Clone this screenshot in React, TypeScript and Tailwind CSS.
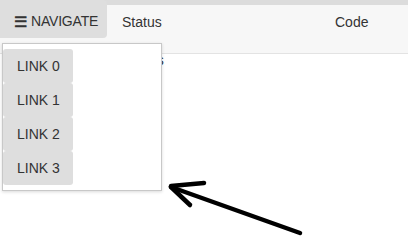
import React from 'react'

const links = ['LINK 0', 'LINK 1', 'LINK 2', 'LINK 3']

const App = () => {
  return (
    <div className="relative h-[241px] w-[408px] overflow-hidden bg-white text-[14px] text-[#333] font-['Liberation_Sans',Arial,sans-serif]">
      <div className="h-[5px] bg-[#dcdcdc]" />
      <div className="flex h-[49px] items-start border-b border-[#e3e3e3] bg-[#f7f7f7]">
        <div className="relative">
          <button className="-mt-[5px] flex h-[38px] w-[107px] items-center gap-[4px] rounded-br-[4px] rounded-tr-[4px] bg-[#dedede] pl-[14px] pt-[5px] text-[14px] text-[#333]">
            <span className="text-[15px] font-bold leading-none">&#9776;</span>
            <span className="tracking-[-0.2px]">NAVIGATE</span>
          </button>
          <div className="absolute left-[2px] top-[38px] z-10 flex h-[148px] w-[160px] flex-col border border-[#c8c8c8] bg-white pt-[5px] shadow-[0_1px_3px_rgba(0,0,0,0.15)]">
            {links.map((l) => (
              <button key={l} className="flex h-[34px] w-[70px] items-center rounded-[3px] bg-[#dedede] pl-[14px] text-[14px] text-[#333]">
                {l}
              </button>
            ))}
          </div>
        </div>
        <div className="flex h-[34px] flex-1 items-center">
          <span className="ml-[15px] w-[213px]">Status</span>
          <span>Code</span>
        </div>
      </div>
      <div className="flex h-[12px] items-center pl-[124px] text-[14px]">
        <span>Status</span>
      </div>
      <svg className="absolute left-0 top-0" width="408" height="241" viewBox="0 0 408 241">
        <g stroke="#000" strokeWidth="4.5" strokeLinecap="round" fill="none">
          <path d="M300 233 L171 187" />
          <path d="M171 186 L204 183" />
          <path d="M171 187 L190 205" />
        </g>
      </svg>
    </div>
  )
}

export default App
